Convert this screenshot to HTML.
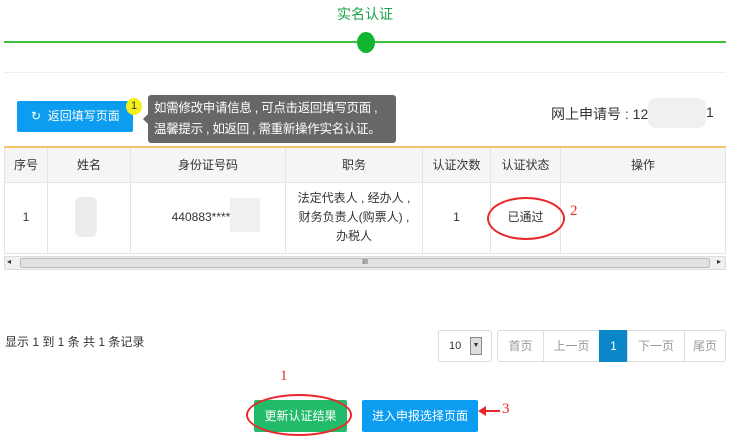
<!DOCTYPE html><html><head><meta charset="utf-8"><style>
*{margin:0;padding:0;box-sizing:border-box}
body{width:730px;height:438px;background:#fff;font-family:"Liberation Sans","Noto Sans CJK SC",sans-serif;font-size:12px;color:#333;position:relative;overflow:hidden}
.a{position:absolute}
table{border-collapse:collapse;position:absolute;left:4px;top:146px;width:722px;border-top:2px solid #f9c56a}
td,th{border:1px solid #e4e4e4;text-align:center;font-weight:normal;font-size:12px;color:#333}
th{background:#f5f5f5;height:35px}
td{height:71px;line-height:19px}
.pg{position:absolute;top:330px;height:32px;border:1px solid #ddd;line-height:30px;text-align:center;color:#999;font-size:12px}
</style></head><body>
<div class="a" style="left:0;width:730px;top:4px;text-align:center;color:#1aa34a;font-size:14px">实名认证</div>
<div class="a" style="left:4px;width:722px;top:41px;height:2px;background:#3cc03c"></div>
<div class="a" style="left:357px;top:32px;width:18px;height:21px;border-radius:50%;background:#12b530"></div>
<div class="a" style="left:4px;width:722px;top:72px;height:1px;background:#eee"></div>
<div class="a" style="left:17px;top:101px;width:116px;height:31px;background:#0c9cf0;border-radius:2px;color:#fff;line-height:31px;padding-left:14px">↻ &nbsp;返回填写页面</div>
<div class="a" style="left:126px;top:98px;width:16px;height:17px;border-radius:50%;background:#f4ef1a;color:#333;text-align:center;line-height:17px;font-size:11px">1</div>
<div class="a" style="left:148px;top:95px;width:248px;height:48px;background:#676767;border-radius:3px;color:#fff;font-size:12.5px;line-height:21px;padding:3px 6px;white-space:nowrap;letter-spacing:-0.3px">如需修改申请信息 , 可点击返回填写页面 ,<br>温馨提示 , 如返回 , 需重新操作实名认证。</div>
<div class="a" style="left:143px;top:114px;border:5px solid transparent;border-right-color:#676767;border-left:0"></div>
<div class="a" style="left:551px;top:104px;font-size:14px;color:#333">网上申请号 : 12</div>
<div class="a" style="left:648px;top:98px;width:58px;height:30px;background:#f0f0f0;border-radius:8px"></div>
<div class="a" style="left:706px;top:104px;font-size:14px">1</div>
<table><tr><th style="width:43px">序号</th><th style="width:83px">姓名</th><th style="width:155px">身份证号码</th><th style="width:137px">职务</th><th style="width:68px">认证次数</th><th style="width:70px">认证状态</th><th>操作</th></tr>
<tr><td>1</td><td></td><td>440883*******</td><td>法定代表人 , 经办人 ,<br>财务负责人(购票人) ,<br>办税人</td><td>1</td><td>已通过</td><td></td></tr></table>
<div class="a" style="left:75px;top:197px;width:22px;height:40px;background:#ececec;border-radius:6px"></div>
<div class="a" style="left:230px;top:198px;width:30px;height:34px;background:#f0f0f0"></div>
<div class="a" style="left:487px;top:197px;width:78px;height:43px;border:2px solid #e8282a;border-radius:50%"></div>
<div class="a" style="left:570px;top:203px;color:#e8282a;font-size:15px;font-family:'Liberation Serif',serif">2</div>
<div class="a" style="left:4px;top:256px;width:722px;height:14px;background:#f0f0f0;border:1px solid #ddd"></div>
<div class="a" style="left:20px;top:258px;width:690px;height:10px;background:#e2e2e2;border:1px solid #bbb;border-radius:2px;text-align:center;font-size:7px;line-height:8px">III</div>
<div class="a" style="left:7px;top:257px;font-size:8px">◂</div><div class="a" style="left:717px;top:257px;font-size:8px">▸</div>
<div class="a" style="left:5px;top:333px;font-size:12px">显示 1 到 1 条 共 1 条记录</div>
<div class="pg" style="left:438px;width:54px;border-radius:3px;color:#333;text-align:left;padding-left:10px;font-size:11px">10<span style="position:absolute;left:31px;top:6px;width:12px;height:18px;border:1px solid #888;background:#ddd;font-size:7px;line-height:16px;text-align:center">▼</span></div>
<div class="pg" style="left:497px;width:47px;border-radius:3px 0 0 3px">首页</div>
<div class="pg" style="left:543px;width:57px">上一页</div>
<div class="pg" style="left:599px;width:29px;background:#0a87c8;border-color:#0a87c8;color:#fff">1</div>
<div class="pg" style="left:627px;width:58px">下一页</div>
<div class="pg" style="left:684px;width:42px;border-radius:0 3px 3px 0">尾页</div>
<div class="a" style="left:280px;top:368px;color:#e8282a;font-size:15px;font-family:'Liberation Serif',serif">1</div>
<div class="a" style="left:254px;top:400px;width:93px;height:32px;background:#21bb6a;border-radius:2px;color:#fff;text-align:center;line-height:32px">更新认证结果</div>
<div class="a" style="left:246px;top:394px;width:106px;height:42px;border:2px solid #e8282a;border-radius:50%"></div>
<div class="a" style="left:362px;top:400px;width:116px;height:32px;background:#0c9cf0;border-radius:2px;color:#fff;text-align:center;line-height:32px">进入申报选择页面</div>
<div class="a" style="left:482px;top:410px;width:18px;height:2px;background:#e8282a"></div>
<div class="a" style="left:478px;top:406px;border:5px solid transparent;border-right:8px solid #e8282a;border-left:0"></div>
<div class="a" style="left:502px;top:401px;color:#e8282a;font-size:15px;font-family:'Liberation Serif',serif">3</div>
</body></html>
